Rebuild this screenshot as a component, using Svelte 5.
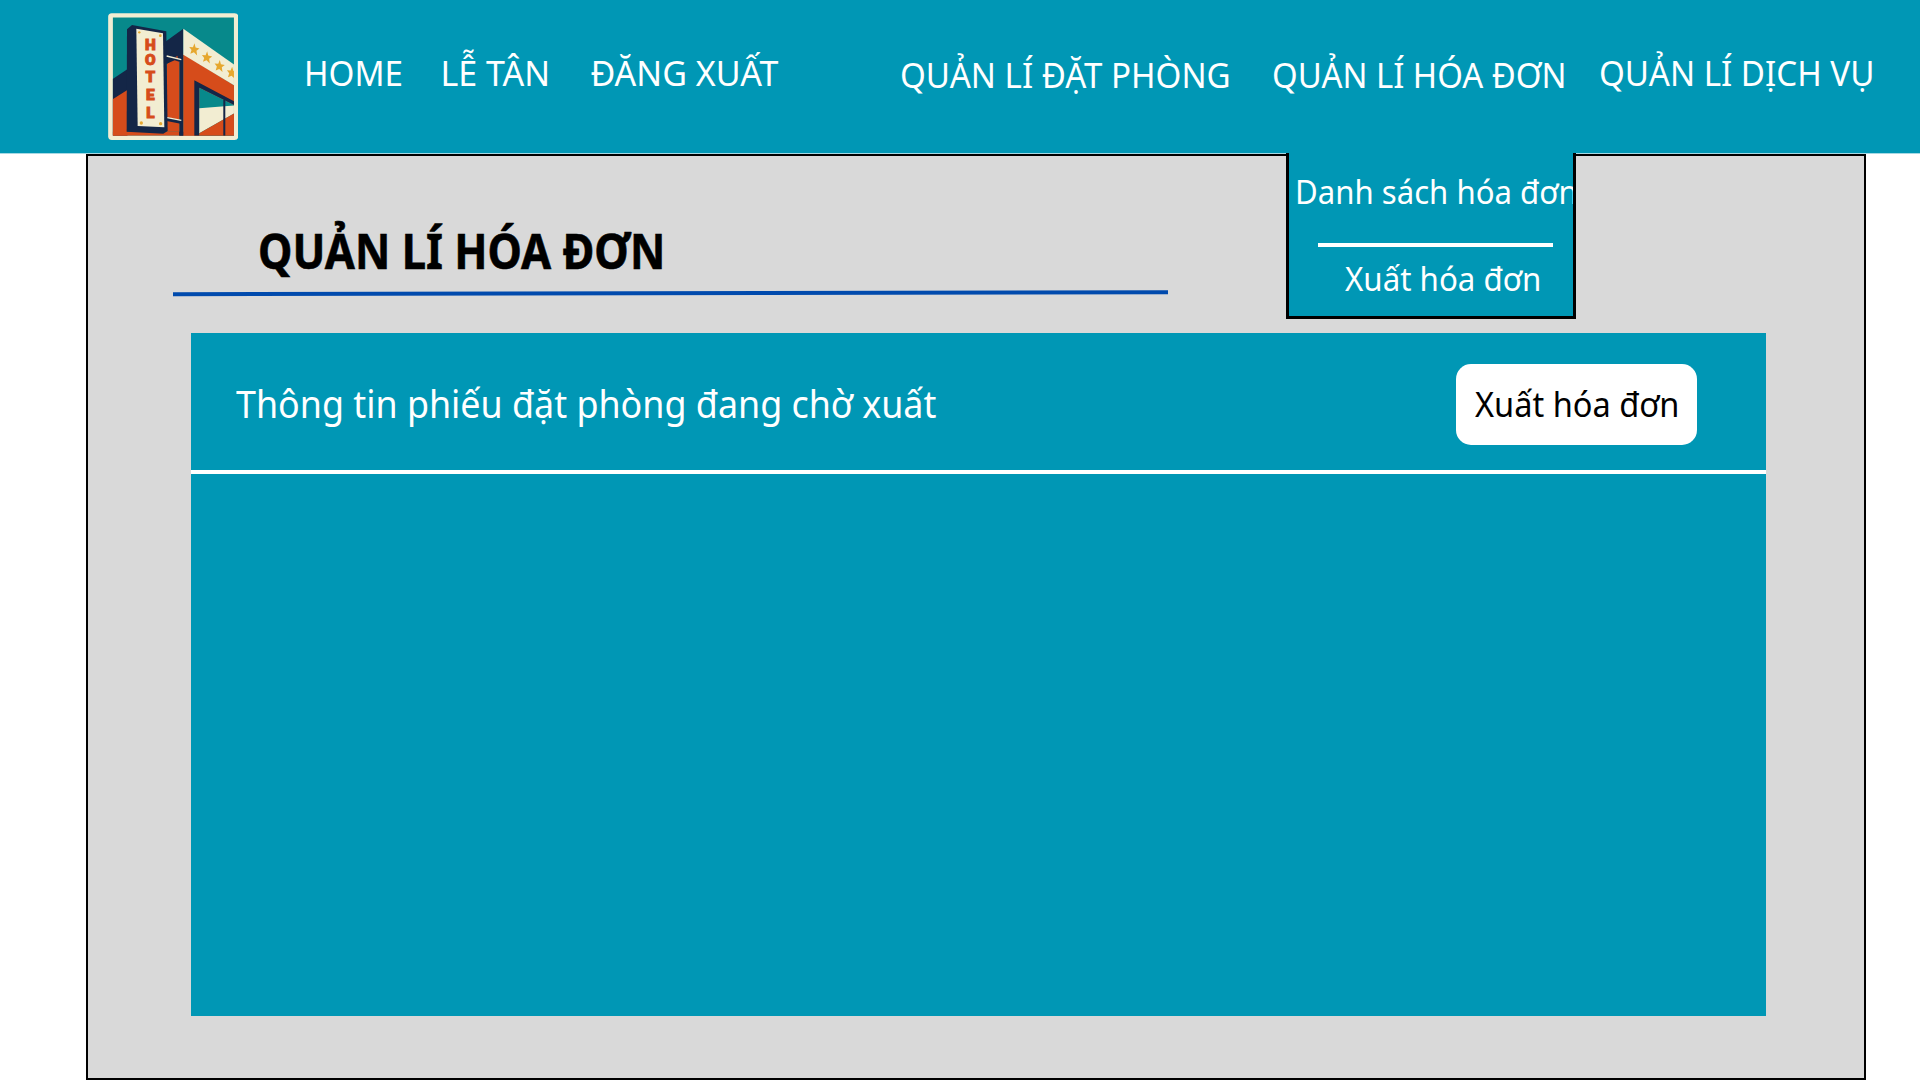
<script>
  const staffLinks = [
    { label: 'HOME', tone: 'home' },
    { label: 'LỄ TÂN', tone: 'desk' },
    { label: 'ĐĂNG XUẤT', tone: 'logout' },
  ];
  const manageLinks = [
    { label: 'QUẢN LÍ ĐẶT PHÒNG', tone: 'booking' },
    { label: 'QUẢN LÍ HÓA ĐƠN', tone: 'invoice' },
    { label: 'QUẢN LÍ DỊCH VỤ', tone: 'service' },
  ];
  const sign = [
    { ch: 'H', y: 134 },
    { ch: 'O', y: 180 },
    { ch: 'T', y: 231 },
    { ch: 'E', y: 285 },
    { ch: 'L', y: 340 },
  ];
  const stars = [
    { x: 297, y: 133 },
    { x: 335, y: 157 },
    { x: 373, y: 183 },
    { x: 410, y: 203 },
  ];
</script>

<header class="topbar">
  <svg class="logo" viewBox="38 24 391 381" aria-label="Hotel">
    <defs>
      <clipPath id="scene"><rect x="52" y="37" width="364" height="355" /></clipPath>
    </defs>
    <rect x="38.500" y="24.500" width="390.500" height="380.500" rx="11" fill="#f2edd2" />
    <g clip-path="url(#scene)">
      <rect x="52" y="37" width="364" height="355" fill="#07898b" />
      <path d="M52 222 96 193V392H52Z" fill="#142647" />
      <path d="M52 283 96 255V392H52Z" fill="#d64c1b" />
      <path d="M52 380H420V392H52Z" fill="#d64c1b" />
      <path d="M210 110 264 71V392H252V170L210 176Z" fill="#142647" />
      <path d="M214 178 246 152 252 170V380H214Z" fill="#d64c1b" />
      <path d="M214 150 252 160V170L238 166 214 176Z" fill="#142647" />
      <path d="M214 336 256 346V356L214 348Z" fill="#142647" />
      <path d="M264 147 420 243V392H264Z" fill="#d64c1b" />
      <path d="M252 380H264V392H252Z" fill="#142647" />
      <path d="M264 71 420 181V243L264 149Z" fill="#f2edd2" />
      <path d="M297 226 420 291V302L312 248V392H297Z" fill="#142647" />
      <path d="M312 248 420 302V392H312Z" fill="#07898b" />
      <path d="M312 310 420 301V323L312 385Z" fill="#f2edd2" />
      <path d="M312 385 420 323V392H312Z" fill="#d64c1b" />
      <rect x="384" y="284" width="6" height="108" fill="#142647" />
      <path d="M95 73 110 60 213 79 217 378 204 386 94 380Z" fill="#142647" />
      <path d="M123 71 203 85 207 367 127 363Z" fill="#f2edd2" />
      <path d="M214 153 258 164M216 338 258 346" stroke="#f2edd2" stroke-width="4" />
      <g fill="#e6a72e">
        <circle cx="132" cy="82" r="3.500" /><circle cx="195" cy="92" r="4" />
        <circle cx="138" cy="354" r="5" /><circle cx="196" cy="356" r="5" />
        {#each stars as s}
          <path
            transform="translate({s.x} {s.y}) rotate(8)"
            d="M-2-18 3-6 15-5 7 3 11 17 0 9-10 15-8 3-16-5-5-6Z"
          />
        {/each}
      </g>
      {#each sign as s}
        <text class="sign" x="165" y={s.y}>{s.ch}</text>
      {/each}
    </g>
  </svg>

  <nav class="links staff">
    {#each staffLinks as l}<a class={l.tone}>{l.label}</a>{/each}
  </nav>
  <nav class="links manage">
    {#each manageLinks as l}<a class={l.tone}>{l.label}</a>{/each}
  </nav>

  <div class="dropdown">
    <a class="list">Danh sách hóa đơn</a>
    <hr />
    <a class="export">Xuất hóa đơn</a>
  </div>
</header>

<main class="page">
  <h1><span>QUẢN LÍ HÓA ĐƠN</span></h1>
  <svg class="rule" viewBox="0 0 995 8"><path d="M0 4.200 995 2.200" stroke="#004aad" stroke-width="4" /></svg>

  <section class="panel">
    <div class="panel-head">
      <h2>Thông tin phiếu đặt phòng đang chờ xuất</h2>
      <button><span>Xuất hóa đơn</span></button>
    </div>
  </section>
</main>

<style>
  :global(body) {
    background: #fff;
    overflow: hidden;
  }
  :global(#app) {
    height: 1080px;
    display: flex;
    flex-direction: column;
    font-family: 'Noto Sans', sans-serif;
  }
  .topbar {
    position: relative;
    box-sizing: border-box;
    flex: none;
    width: 1920px;
    height: 154px;
    display: flex;
    align-items: flex-start;
    background: #0097b5;
    border-bottom: 1px solid #a6d9e4;
    color: #fff;
  }
  .logo {
    flex: none;
    width: 130.300px;
    height: 127px;
    margin: 13px 0 0 107.700px;
  }
  .sign {
    font: 900 46px Roboto, sans-serif;
    fill: #d64c1b;
    stroke: #d64c1b;
    stroke-width: 3px;
    text-anchor: middle;
  }
  .links {
    display: grid;
    white-space: nowrap;
    font-size: 34px;
    line-height: 40px;
  }
  .links a { transform-origin: left; }
  .staff {
    grid-template-columns: 136px 150px 199px;
    margin: 53px 0 0 66.500px;
  }
  .manage {
    grid-template-columns: 372px 327px 290px;
    margin: 55px 0 0 111px;
  }
  .home { transform: scaleX(0.975); }
  .booking { transform: scaleX(0.973); }
  .invoice { transform: scaleX(0.967); }
  .service {
    transform: scaleX(0.974);
    margin-top: -2px;
  }

  .dropdown {
    position: absolute;
    z-index: 2;
    left: 1286px;
    top: 153px;
    box-sizing: border-box;
    width: 290px;
    height: 166px;
    padding-top: 19px;
    overflow: hidden;
    background: #0097b5;
    border: 3px solid #000;
    border-top: 0;
    font-size: 32.500px;
    line-height: 40px;
    white-space: nowrap;
  }
  .dropdown a {
    display: block;
    width: max-content;
    transform-origin: left;
  }
  .list {
    margin-left: 5.500px;
    transform: scaleX(0.958);
  }
  .dropdown hr {
    width: 235px;
    height: 4px;
    margin: 31px 0 12px 29px;
    border: 0;
    background: #fff;
  }
  .export {
    margin-left: 56px;
    transform: scaleX(0.962);
  }

  .page {
    box-sizing: border-box;
    flex: 1;
    width: 1780px;
    margin: 0 0 0 86px;
    padding: 65px 98px 0 103.400px;
    border: 2px solid #000;
    background: #d9d9d9;
  }
  h1, h2 { margin: 0; }
  h1 {
    margin-left: 67px;
    font-size: 47.600px;
    font-weight: 700;
    line-height: 60px;
    white-space: nowrap;
  }
  h1 span {
    display: inline-block;
    transform: scaleX(0.914);
    transform-origin: left;
    -webkit-text-stroke: 0.6px #000;
  }
  .rule {
    display: block;
    width: 995px;
    height: 8px;
    margin: 9px 0 0 -18.400px;
  }
  .panel {
    width: 1574.500px;
    height: 682.500px;
    margin-top: 35px;
    background: #0097b5;
  }
  .panel-head {
    box-sizing: border-box;
    height: 141px;
    display: flex;
    align-items: flex-start;
    justify-content: space-between;
    padding: 31.400px 68.500px 0 44.500px;
    border-bottom: 4px solid #fff;
    color: #fff;
  }
  h2 {
    width: 738px;
    margin-top: 15.600px;
    font-size: 37.800px;
    font-weight: 400;
    line-height: 48px;
    white-space: nowrap;
    transform: scaleX(0.948);
    transform-origin: left;
  }
  button {
    width: 241px;
    height: 81px;
    padding: 0 0 2px 19px;
    border: 0;
    border-radius: 15px;
    background: #fff;
    color: #000;
    font: 400 34px/40px 'Noto Sans', sans-serif;
    text-align: left;
    white-space: nowrap;
  }
  button span {
    display: inline-block;
    transform: scaleX(0.957);
    transform-origin: left;
  }
</style>
